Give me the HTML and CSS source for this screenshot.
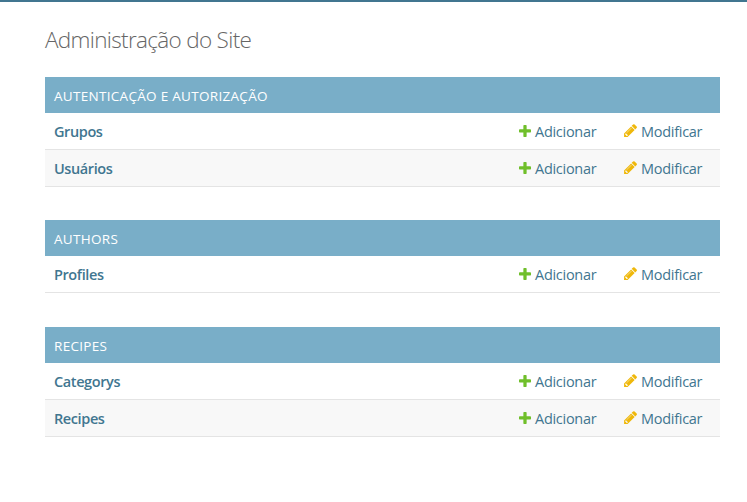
FILE: index.html
```html
<!DOCTYPE html>
<html lang="pt-br">
<head>
<meta charset="utf-8">
<title>Administração do Site</title>
<link rel="stylesheet" href="styles.css">
</head>
<body>
<svg class="defs" aria-hidden="true">
  <symbol id="plus" viewBox="192 192 1408 1408"><path fill="#70bf2b" d="M1600 796v192q0 40-28 68t-68 28h-416v416q0 40-28 68t-68 28h-192q-40 0-68-28t-28-68v-416h-416q-40 0-68-28t-28-68v-192q0-40 28-68t68-28h416v-416q0-40 28-68t68-28h192q40 0 68 28t28 68v416h416q40 0 68 28t28 68z"/></symbol>
  <symbol id="pencil" viewBox="128 133 1515 1531"><path fill="#efb80b" d="M491 1536l91-91-235-235-91 91v107h128v128h107zm523-928q0-22-22-22-10 0-17 7l-542 542q-7 7-7 17 0 22 22 22 10 0 17-7l542-542q7-7 7-17zm-54-192l416 416-832 832h-416v-416zm683 96q0 53-37 90l-166 166-416-416 166-165q36-38 90-38 53 0 91 38l235 234q37 39 37 91z"/></symbol>
</svg>
<main class="content">
  <h1>Administração do Site</h1>
  <section class="module">
    <h2 class="caption">Autenticação e Autorização</h2>
    <div class="row"><a class="name">Grupos</a><a class="add"><svg><use href="#plus"/></svg><span>Adicionar</span></a><a class="change"><svg><use href="#pencil"/></svg><span>Modificar</span></a></div>
    <div class="row alt"><a class="name">Usuários</a><a class="add"><svg><use href="#plus"/></svg><span>Adicionar</span></a><a class="change"><svg><use href="#pencil"/></svg><span>Modificar</span></a></div>
  </section>
  <section class="module authors">
    <h2 class="caption">Authors</h2>
    <div class="row"><a class="name">Profiles</a><a class="add"><svg><use href="#plus"/></svg><span>Adicionar</span></a><a class="change"><svg><use href="#pencil"/></svg><span>Modificar</span></a></div>
  </section>
  <section class="module">
    <h2 class="caption">Recipes</h2>
    <div class="row"><a class="name">Categorys</a><a class="add"><svg><use href="#plus"/></svg><span>Adicionar</span></a><a class="change"><svg><use href="#pencil"/></svg><span>Modificar</span></a></div>
    <div class="row alt"><a class="name">Recipes</a><a class="add"><svg><use href="#plus"/></svg><span>Adicionar</span></a><a class="change"><svg><use href="#pencil"/></svg><span>Modificar</span></a></div>
  </section>
</main>
</body>
</html>
```
FILE: styles.css
```css
* { box-sizing: border-box; }
body {
  margin: 0;
  min-height: 502px;
  border-top: 2px solid #417690;
  background: #fff;
  color: #417690;
  font-family: "Open Sans", "Noto Sans", sans-serif;
}
.defs { display: none; }
.content { width: 675px; margin-left: 45px; padding-top: 22px; }
h1 {
  margin: 0 0 21px;
  height: 32px;
  line-height: 32px;
  font-size: 22.5px;
  font-weight: 300;
  letter-spacing: -0.67px;
  color: #666;
  white-space: nowrap;
}
.module { margin-bottom: 33px; }
.module.authors { margin-bottom: 34px; }
.caption {
  margin: 0;
  height: 36px;
  padding: 1px 9px 0;
  line-height: 37px;
  background: #79aec8;
  color: #fff;
  font-size: 13.5px;
  font-weight: 400;
  text-transform: uppercase;
  letter-spacing: 0.3px;
}
.row {
  display: grid;
  grid-template-columns: 464px 105px 1fr;
  align-items: center;
  height: 37px;
  padding-left: 9px;
  border-bottom: 1px solid #e4e4e4;
  font-size: 14.5px;
  line-height: 36px;
}
.row.alt { background: #f8f8f8; }
.row a { padding-top: 1px; height: 36px; }
.name { font-weight: 600; letter-spacing: -0.4px; }
.add, .change { display: flex; font-weight: 400; letter-spacing: -0.28px; }
.row svg { flex: none; }
.add svg { width: 12px; height: 12px; margin: 11px 4px 0 1px; }
.change svg { width: 13px; height: 13px; margin: 10px 4px 0 1px; }
```
